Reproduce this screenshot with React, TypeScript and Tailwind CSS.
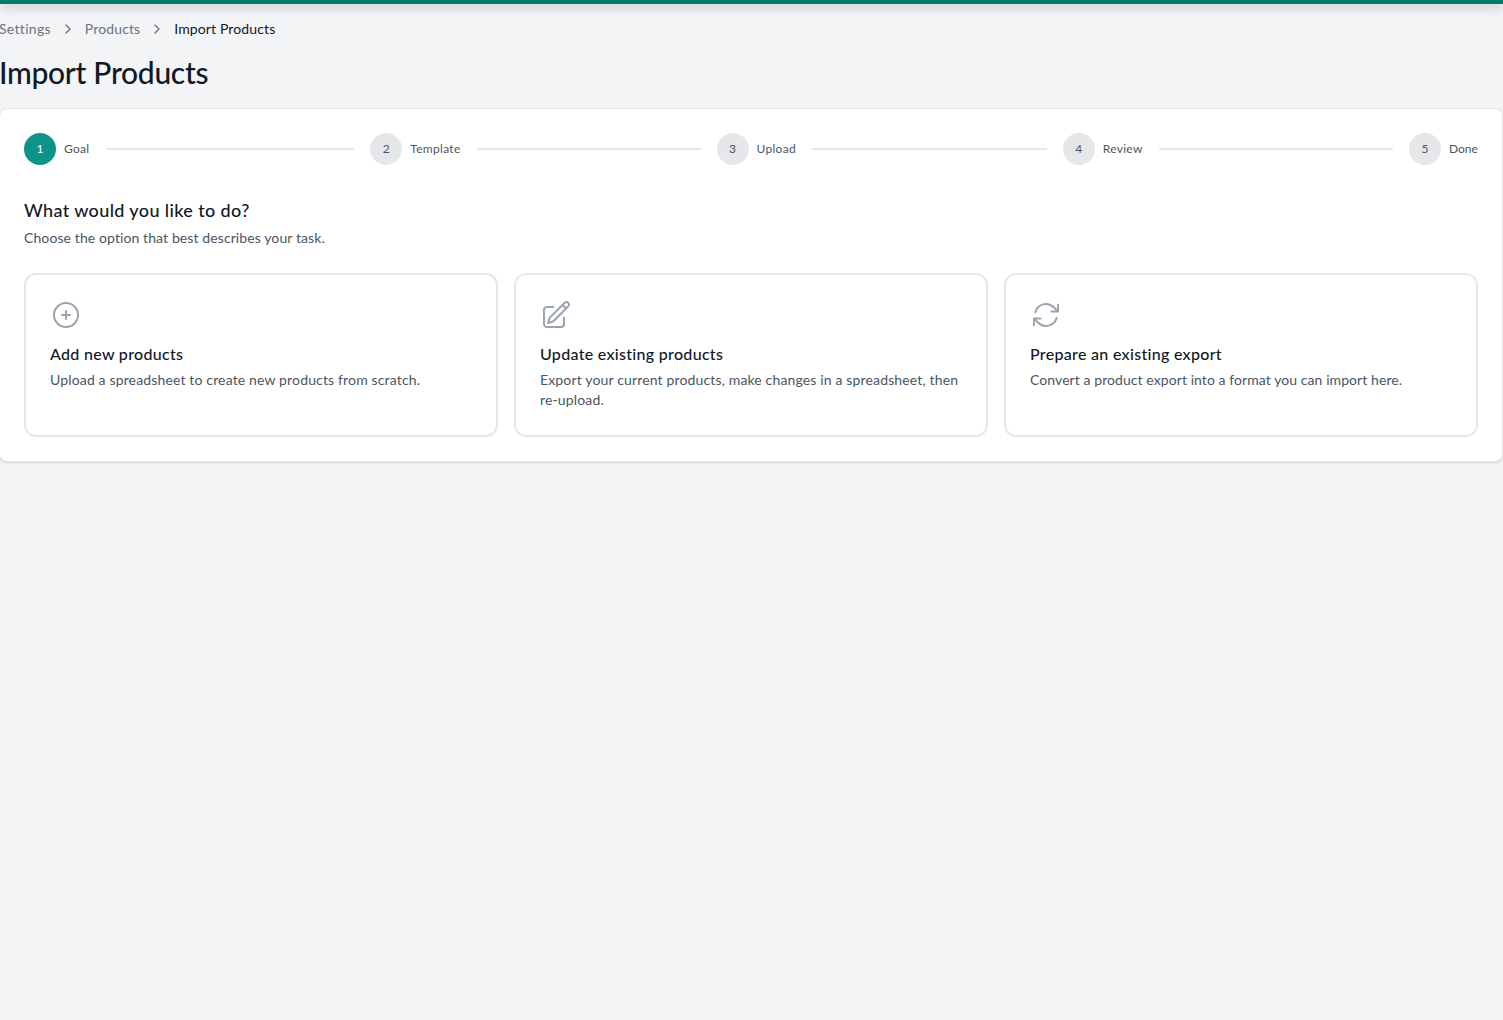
import { ChevronRight } from "lucide-react";
import type { ComponentType } from "react";
import { HiOutlineArrowPath, HiOutlinePencilSquare, HiOutlinePlusCircle } from "react-icons/hi2";

const steps = ["Goal", "Template", "Upload", "Review", "Done"];

interface Option {
  title: string;
  description: string;
  descriptionClass: string;
  icon: ComponentType<{ className?: string }>;
}

const options: Option[] = [
  {
    title: "Add new products",
    description: "Upload a spreadsheet to create new products from scratch.",
    descriptionClass: "tracking-[0.15px]",
    icon: HiOutlinePlusCircle,
  },
  {
    title: "Update existing products",
    description: "Export your current products, make changes in a spreadsheet, then re-upload.",
    descriptionClass: "tracking-[0.15px]",
    icon: HiOutlinePencilSquare,
  },
  {
    title: "Prepare an existing export",
    description: "Convert a product export into a format you can import here.",
    descriptionClass: "tracking-[0.075px]",
    icon: HiOutlineArrowPath,
  },
];

const App = () => {
  return (
    <div className="min-h-[1020px] overflow-hidden bg-[#f3f4f6] font-['Lato','Noto_Sans',sans-serif] text-[#111827]">
      <div className="h-1 bg-[#047a6c] shadow-[0_2px_12px_rgba(0,0,0,0.32)]" />

      <div className="-ml-px">
        <nav className="mt-[15px] flex h-5 items-center text-sm leading-5 tracking-[0.12px]">
          <span className="tracking-[0.3px] text-[#6b7280]">Settings</span>
          <ChevronRight className="mx-[9px] h-4 w-4 text-[#6b7280]" />
          <span className="text-[#6b7280]">Products</span>
          <ChevronRight className="mx-[9px] h-4 w-4 text-[#6b7280]" />
          <span className="text-[#111827]">Import Products</span>
        </nav>

        <h1 className="mt-[15px] mb-[18px] text-3xl leading-9 font-medium tracking-[-0.3px]">Import Products</h1>

        <div className="rounded-lg border border-[#e5e7eb] bg-white p-6 shadow-sm">
          <div className="flex items-center">
            {steps.map((step, i) => (
              <div key={step} className={i < steps.length - 1 ? "flex flex-1 items-center" : "flex items-center"}>
                <div
                  className={
                    i === 0
                      ? "flex h-8 w-8 items-center justify-center rounded-full bg-[#0d9488] text-xs text-white"
                      : "flex h-8 w-8 items-center justify-center rounded-full bg-[#e5e7eb] text-xs text-[#4b5563]"
                  }
                >
                  {i + 1}
                </div>
                {i < steps.length - 1 ? (
                  <span className="ml-2 text-xs tracking-[0.3px] text-[#4b5563]">{step}</span>
                ) : (
                  <span className="ml-2 w-[29px] text-xs whitespace-nowrap text-[#4b5563]">{step}</span>
                )}
                {i < steps.length - 1 && <div className="mx-4 h-0.5 flex-1 bg-[#e5e7eb]" />}
              </div>
            ))}
          </div>

          <h2 className="mt-[31px] text-lg leading-7 font-medium tracking-[0.38px]">What would you like to do?</h2>
          <p className="mt-1 text-sm leading-5 tracking-[0.1px] text-[#4b5563]">
            Choose the option that best describes your task.
          </p>

          <div className="mt-[25px] grid grid-cols-3 gap-4">
            {options.map((option) => (
              <div key={option.title} className="rounded-xl border-2 border-[#e5e7eb] bg-white p-6 pb-[25px]">
                <option.icon className="h-8 w-8 text-[#9ca3af]" />
                <h3 className="mt-[11px] text-base leading-6 font-medium tracking-[0.3px]">{option.title}</h3>
                <p className={`mt-1 text-sm leading-5 text-[#4b5563] ${option.descriptionClass}`}>
                  {option.description}
                </p>
              </div>
            ))}
          </div>
        </div>
      </div>
    </div>
  );
};

export default App;
